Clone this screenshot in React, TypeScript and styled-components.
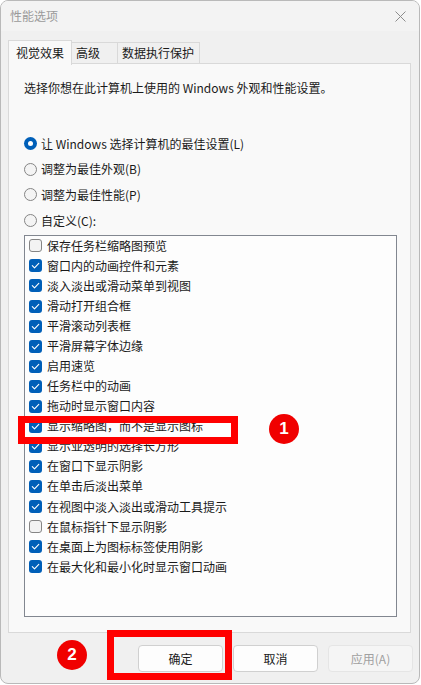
import React from "react";
import styled, { createGlobalStyle } from "styled-components";

const Global = createGlobalStyle`
  html, body { margin: 0; padding: 0; background: #ffffff; }
  body { font-family: "Microsoft YaHei UI", "Noto Sans CJK SC", "Noto Sans", sans-serif; }
  * { box-sizing: border-box; }
`;

const Window = styled.div`
  position: relative;
  width: 420px;
  height: 684px;
  background: #f0f0f0;
  border: 1px solid #b9b9b9;
  border-radius: 8px;
  overflow: hidden;
  display: flex;
  flex-direction: column;
  font-size: 12px;
  color: #1a1a1a;
`;

const TitleBar = styled.div`
  height: 30px;
  flex: none;
  background: #f3f3f3;
  display: flex;
  align-items: center;
  justify-content: space-between;
  padding: 0 10px 0 9px;
`;

const Title = styled.span`
  color: #9a9a9a;
  font-size: 12px;
  line-height: 16px;
`;

const CloseBtn = styled.div`
  width: 20px;
  height: 20px;
  display: flex;
  align-items: center;
  justify-content: center;
  margin-right: -1px;
`;

const Body = styled.div`
  flex: 1;
  display: flex;
  flex-direction: column;
  padding: 9px 8px 0 7px;
`;

const TabRow = styled.div`
  display: flex;
  align-items: flex-end;
  height: 24px;
  position: relative;
  z-index: 2;
  margin-bottom: -1px;
`;

const Tab = styled.div<{ $active?: boolean; $w: number }>`
  width: ${(p) => p.$w}px;
  height: ${(p) => (p.$active ? 25 : 22)}px;
  margin-bottom: ${(p) => (p.$active ? -1 : 0)}px;
  border: 1px solid #d9d9d9;
  border-bottom: ${(p) => (p.$active ? "none" : "1px solid #d9d9d9")};
  margin-left: ${(p) => (p.$active ? 0 : -1)}px;
  background: ${(p) => (p.$active ? "#f9f9f9" : "#f0f0f0")};
  display: flex;
  align-items: ${(p) => (p.$active ? "flex-start" : "center")};
  padding-top: ${(p) => (p.$active ? 4 : 0)}px;
  padding-left: ${(p) => (p.$active ? 7 : 4)}px;
  line-height: 16px;
  color: #1a1a1a;
`;

const Panel = styled.div`
  height: 570px;
  background: #f9f9f9;
  border: 1px solid #d9d9d9;
  padding: 16px 13px 0 15px;
  display: flex;
  flex-direction: column;
`;

const Desc = styled.div`
  line-height: 16px;
  height: 16px;
  margin-bottom: 35px;
`;

const RadioRow = styled.label`
  display: flex;
  align-items: center;
  height: 25.6px;
  gap: 4px;
  line-height: 16px;
`;

const RadioCircle = styled.span<{ $on?: boolean }>`
  width: 13px;
  height: 13px;
  border-radius: 50%;
  flex: none;
  display: flex;
  align-items: center;
  justify-content: center;
  background: ${(p) => (p.$on ? "#005fb8" : "#f4f4f4")};
  border: ${(p) => (p.$on ? "none" : "1px solid #858585")};
  &::after {
    content: "";
    display: ${(p) => (p.$on ? "block" : "none")};
    width: 5px;
    height: 5px;
    border-radius: 50%;
    background: #ffffff;
  }
`;

const ListBox = styled.div`
  margin-top: 1.5px;
  height: 382px;
  background: #fdfdfd;
  border: 1px solid #828790;
  padding: 0 0 0 4px;
  display: flex;
  flex-direction: column;
`;

const CheckRow = styled.div`
  height: 20.06px;
  display: flex;
  align-items: center;
  gap: 5px;
  line-height: 16px;
  flex: none;
`;

const Box = styled.span<{ $on?: boolean }>`
  width: 13px;
  height: 13px;
  border-radius: 3px;
  flex: none;
  display: flex;
  align-items: center;
  justify-content: center;
  background: ${(p) => (p.$on ? "#005fb8" : "#f3f3f3")};
  border: ${(p) => (p.$on ? "none" : "1px solid #858585")};
`;

const ButtonRow = styled.div`
  display: flex;
  justify-content: flex-end;
  gap: 10px;
  margin-top: 12px;
  margin-right: -2px;
`;

const Button = styled.div<{ $disabled?: boolean }>`
  width: 85px;
  height: 27px;
  border-radius: 4px;
  display: flex;
  align-items: center;
  justify-content: center;
  font-size: 12px;
  line-height: 16px;
  background: ${(p) => (p.$disabled ? "#f5f5f5" : "#fdfdfd")};
  border: 1px solid ${(p) => (p.$disabled ? "#e5e5e5" : "#d0d0d0")};
  color: ${(p) => (p.$disabled ? "#a0a0a0" : "#1a1a1a")};
`;

const RedBox = styled.div<{ $x: number; $y: number; $w: number; $h: number }>`
  position: absolute;
  left: ${(p) => p.$x}px;
  top: ${(p) => p.$y}px;
  width: ${(p) => p.$w}px;
  height: ${(p) => p.$h}px;
  border: 7px solid #ff0000;
  pointer-events: none;
  z-index: 5;
`;

const Badge = styled.div<{ $x: number; $y: number }>`
  position: absolute;
  left: ${(p) => p.$x}px;
  top: ${(p) => p.$y}px;
  width: 30px;
  height: 30px;
  border-radius: 50%;
  background: #f00000;
  color: #ffffff;
  font-family: "Liberation Sans", Arial, sans-serif;
  font-weight: 700;
  font-size: 17px;
  display: flex;
  align-items: center;
  justify-content: center;
  z-index: 5;
`;

const Check = () => (
  <svg width="13" height="13" viewBox="0 0 13 13">
    <path d="M3.3 6.7 L5.5 8.8 L9.8 4.4" fill="none" stroke="#ffffff" strokeWidth="1.1" strokeLinecap="round" strokeLinejoin="round" />
  </svg>
);

const items: [string, boolean][] = [
  ["保存任务栏缩略图预览", false],
  ["窗口内的动画控件和元素", true],
  ["淡入淡出或滑动菜单到视图", true],
  ["滑动打开组合框", true],
  ["平滑滚动列表框", true],
  ["平滑屏幕字体边缘", true],
  ["启用速览", true],
  ["任务栏中的动画", true],
  ["拖动时显示窗口内容", true],
  ["显示缩略图，而不是显示图标", true],
  ["显示亚透明的选择长方形", true],
  ["在窗口下显示阴影", true],
  ["在单击后淡出菜单", true],
  ["在视图中淡入淡出或滑动工具提示", true],
  ["在鼠标指针下显示阴影", false],
  ["在桌面上为图标标签使用阴影", true],
  ["在最大化和最小化时显示窗口动画", true],
];

const radios = [
  "让 Windows 选择计算机的最佳设置(L)",
  "调整为最佳外观(B)",
  "调整为最佳性能(P)",
  "自定义(C):",
];

export default function App() {
  return (
    <>
      <Global />
      <Window>
        <TitleBar>
          <Title>性能选项</Title>
          <CloseBtn>
            <svg width="11" height="11" viewBox="0 0 11 11">
              <path d="M0.5 0.5 L10.5 10.5 M10.5 0.5 L0.5 10.5" stroke="#8c8c8c" strokeWidth="1" />
            </svg>
          </CloseBtn>
        </TitleBar>
        <Body>
          <TabRow>
            <Tab $active $w={64}>视觉效果</Tab>
            <Tab $w={47}>高级</Tab>
            <Tab $w={83}>数据执行保护</Tab>
          </TabRow>
          <Panel>
            <Desc>选择你想在此计算机上使用的 Windows 外观和性能设置。</Desc>
            {radios.map((r, i) => (
              <RadioRow key={r}>
                <RadioCircle $on={i === 0} />
                <span>{r}</span>
              </RadioRow>
            ))}
            <ListBox>
              {items.map(([t, on]) => (
                <CheckRow key={t}>
                  <Box $on={on}>{on && <Check />}</Box>
                  <span>{t}</span>
                </CheckRow>
              ))}
            </ListBox>
          </Panel>
          <ButtonRow>
            <Button>确定</Button>
            <Button>取消</Button>
            <Button $disabled>应用(A)</Button>
          </ButtonRow>
        </Body>
        <RedBox $x={17} $y={415} $w={220} $h={28} />
        <Badge $x={268} $y={413}>1</Badge>
        <RedBox $x={106} $y={629} $w={125} $h={50} />
        <Badge $x={56} $y={639}>2</Badge>
      </Window>
    </>
  );
}
